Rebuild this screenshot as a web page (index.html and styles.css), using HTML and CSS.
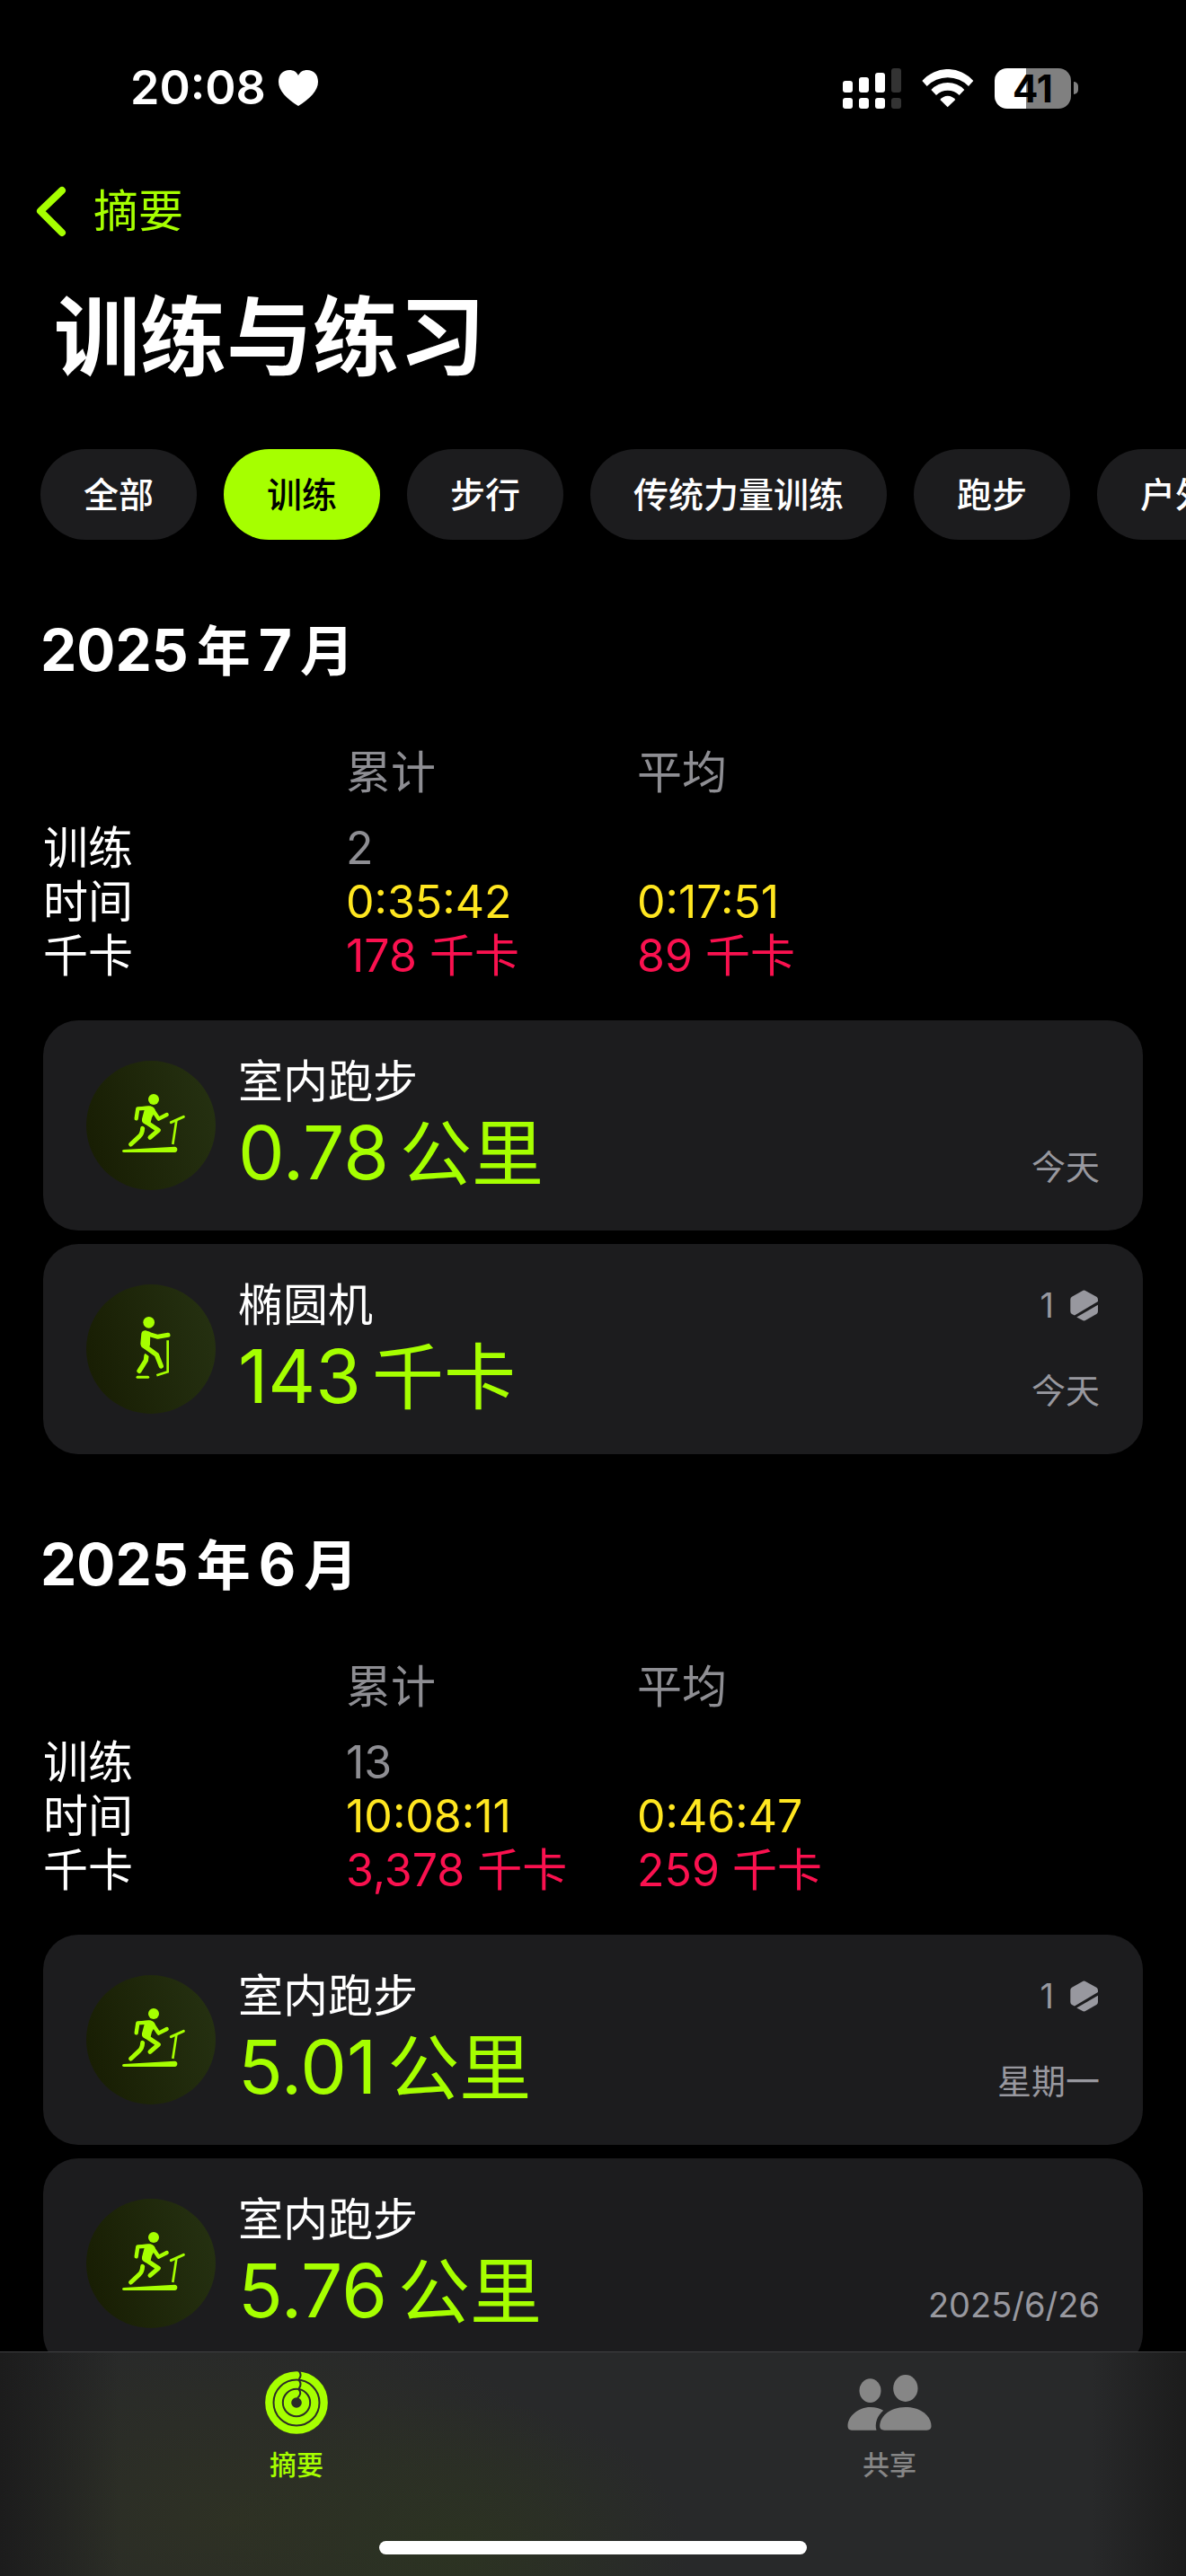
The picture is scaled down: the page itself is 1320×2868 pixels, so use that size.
FILE: index.html
```html
<!DOCTYPE html>
<html lang="zh-CN">
<head>
<meta charset="UTF-8">
<meta name="viewport" content="width=device-width, initial-scale=1">
<title>训练与练习</title>
<link rel="stylesheet" href="styles.css">
</head>
<body>
    <!-- shared icons -->
    <svg class="defs" aria-hidden="true">
        <symbol id="treadmill" viewBox="48 36 432 432">
            <g fill="none" stroke="currentColor" stroke-linecap="round" stroke-linejoin="round">
                <path stroke-width="13" d="M215 229 L220 196 L256 194"/>
                <path stroke-width="13" d="M264 196 C274 202 280 218 290 230 L317 216"/>
                <path stroke-width="15" d="M244 238 L289 268 L261 292"/>
                <path stroke-width="15" d="M236 262 Q235 280 224 290 L197 315"/>
                <path stroke-width="9" d="M331 242 L373 223"/>
                <path stroke-width="8" stroke-linecap="butt" d="M349 236 L337 315"/>
            </g>
            <g fill="currentColor">
                <circle cx="273" cy="165" r="18"/>
                <path d="M236 189 L262 187 Q278 192 279 205 L267 226 L262 246 L246 248 Q232 243 234 230 L242 200Z"/>
                <path d="M173 333 L343 323 Q352 324 352 332 Q352 341 343 342 L173 342 Q168 341 168 338 Q168 333 173 333Z"/>
            </g>
            <path d="M225 247 Q234 246 246 257" fill="none" stroke="#1e260c" stroke-width="5"/>
        </symbol>
        <symbol id="elliptical" viewBox="48 48 432 432">
            <g fill="none" stroke="currentColor" stroke-linecap="round" stroke-linejoin="round">
                <path stroke-width="15" d="M246 211 L287 223 L321 217"/>
                <path stroke-width="16" d="M240 252 L283 283 L298 321"/>
                <path stroke-width="16" d="M249 286 L247 302 L225 337"/>
                <path stroke-width="9" d="M219 358 L254 358"/>
                <path stroke-width="8" stroke-linecap="butt" stroke-linejoin="miter" d="M320 235 L320 340 L283 352"/>
            </g>
            <g fill="currentColor">
                <circle cx="257" cy="175" r="19"/>
                <path d="M232 212 Q235 202 246 202 L262 207 L261 246 Q262 258 248 264 Q229 259 229 246Z"/>
            </g>
            <path d="M232 268 Q246 276 262 288" fill="none" stroke="#1e260c" stroke-width="5"/>
        </symbol>
        <symbol id="award" viewBox="566 949 94 105">
            <path fill="currentColor" d="M607 952 Q613 948 619 952 L655 972 Q660 975 660 981 L660 988 L581 1035 L572 1030 Q567 1027 567 1021 L567 981 Q567 975 572 972Z"/>
            <path fill="currentColor" d="M660 999 L660 1021 Q660 1027 655 1030 L619 1051 Q613 1055 607 1051 L588 1041Z"/>
        </symbol>
    </svg>

    <header class="status-bar">
        <div class="status-time">
            <span>20:08</span>
            <svg width="44" height="40" viewBox="0 0 44 40"><path fill="#fff" d="M22 40 C9 32 0 23 0 13 C0 5 5 0 12 0 C17 0 20 2 22 6 C24 2 27 0 32 0 C39 0 44 5 44 13 C44 23 35 32 22 40Z"/></svg>
        </div>
        <div class="status-icons">
            <svg width="65" height="45" viewBox="0 0 65 45" fill="#fff">
                <rect x="0" y="14" width="11" height="13" rx="3"/>
                <rect x="18" y="10" width="11" height="17" rx="3"/>
                <rect x="36" y="5" width="11" height="22" rx="3"/>
                <rect x="54" y="0" width="11" height="27" rx="3" fill="#333"/>
                <rect x="0" y="33" width="11" height="12" rx="3"/>
                <rect x="18" y="33" width="11" height="12" rx="3"/>
                <rect x="36" y="33" width="11" height="12" rx="3"/>
                <rect x="54" y="33" width="11" height="12" rx="3" fill="#333"/>
            </svg>
            <svg width="58" height="43" viewBox="494 104 174 129" fill="#fff">
                <path d="M495 143 A113 113 0 0 1 666 143 L650 161 A98 98 0 0 0 511 161Z"/>
                <path d="M525 173 A76 76 0 0 1 636 173 L619 191 A55 55 0 0 0 542 191Z"/>
                <path d="M555 206 A32 32 0 0 1 606 206 L580 231Z"/>
            </svg>
            <div class="battery"><span class="battery-level">41</span></div>
        </div>
    </header>

    <main class="page">
        <a class="back" href="#">
            <svg width="34" height="57" viewBox="0 0 34 57"><path d="M29 5 L5 28 L29 52" fill="none" stroke="currentColor" stroke-width="8" stroke-linecap="round" stroke-linejoin="round"/></svg>
            摘要
        </a>
        <h1>训练与练习</h1>

        <nav class="filters">
            <button type="button">全部</button>
            <button type="button" class="active">训练</button>
            <button type="button">步行</button>
            <button type="button">传统力量训练</button>
            <button type="button">跑步</button>
            <button type="button">户外步行</button>
        </nav>

        <section class="month">
            <h2>2025<span>年</span>7<span>月</span></h2>
            <table>
                <thead>
                    <tr><td></td><th scope="col">累计</th><th scope="col">平均</th></tr>
                </thead>
                <tbody>
                    <tr class="count"><th scope="row">训练</th><td>2</td><td></td></tr>
                    <tr class="time"><th scope="row">时间</th><td>0:35:42</td><td>0:17:51</td></tr>
                    <tr class="energy"><th scope="row">千卡</th><td>178 千卡</td><td>89 千卡</td></tr>
                </tbody>
            </table>
            <a class="card" href="#">
                <svg class="card-icon"><use href="#treadmill"/></svg>
                <div class="card-main">
                    <div class="card-name">室内跑步</div>
                    <div class="card-value">0.78<span>公里</span></div>
                </div>
                <div class="card-side">
                    <div class="card-date">今天</div>
                </div>
            </a>
            <a class="card" href="#">
                <svg class="card-icon"><use href="#elliptical"/></svg>
                <div class="card-main">
                    <div class="card-name">椭圆机</div>
                    <div class="card-value">143<span>千卡</span></div>
                </div>
                <div class="card-side">
                    <div class="card-award">1 <svg width="31" height="35"><use href="#award"/></svg></div>
                    <div class="card-date">今天</div>
                </div>
            </a>
        </section>

        <section class="month">
            <h2>2025<span>年</span>6<span>月</span></h2>
            <table>
                <thead>
                    <tr><td></td><th scope="col">累计</th><th scope="col">平均</th></tr>
                </thead>
                <tbody>
                    <tr class="count"><th scope="row">训练</th><td>13</td><td></td></tr>
                    <tr class="time"><th scope="row">时间</th><td>10:08:11</td><td>0:46:47</td></tr>
                    <tr class="energy"><th scope="row">千卡</th><td>3,378 千卡</td><td>259 千卡</td></tr>
                </tbody>
            </table>
            <a class="card" href="#">
                <svg class="card-icon"><use href="#treadmill"/></svg>
                <div class="card-main">
                    <div class="card-name">室内跑步</div>
                    <div class="card-value">5.01<span>公里</span></div>
                </div>
                <div class="card-side">
                    <div class="card-award">1 <svg width="31" height="35"><use href="#award"/></svg></div>
                    <div class="card-date">星期一</div>
                </div>
            </a>
            <a class="card" href="#">
                <svg class="card-icon"><use href="#treadmill"/></svg>
                <div class="card-main">
                    <div class="card-name">室内跑步</div>
                    <div class="card-value">5.76<span>公里</span></div>
                </div>
                <div class="card-side">
                    <div class="card-date">2025/6/26</div>
                </div>
            </a>
        </section>
    </main>

    <footer class="tab-bar">
        <nav class="tabs">
            <a class="active" href="#">
                <svg width="70" height="70" viewBox="105 60 210 210" fill="none">
                    <g stroke="currentColor">
                        <circle cx="210" cy="165" r="92" stroke-width="25"/>
                        <circle cx="210" cy="165" r="61" stroke-width="25"/>
                        <circle cx="210" cy="165" r="30" stroke-width="25"/>
                    </g>
                    <g stroke="#2a2c2a" stroke-width="6">
                        <path d="M217 58 Q230 72 218 87"/>
                        <path d="M217 89 Q230 103 218 118"/>
                        <path d="M217 120 Q230 134 213 150"/>
                    </g>
                </svg>
                <span>摘要</span>
            </a>
            <a href="#">
                <svg width="94" height="70" viewBox="68 60 281 210" fill="currentColor">
                    <ellipse cx="144" cy="125" rx="36" ry="40"/>
                    <ellipse cx="262" cy="117" rx="41" ry="45"/>
                    <path d="M82 257 Q69 257 69 243 C69 210 105 180 144 180 C162 180 178 185 188 191 C168 207 158 235 165 257Z"/>
                    <path d="M191 257 Q176 257 176 243 C176 215 205 180 262 180 C320 180 348 215 348 243 Q348 257 333 257Z"/>
                </svg>
                <span>共享</span>
            </a>
        </nav>
        <div class="home-indicator"></div>
    </footer>
</body>
</html>
```

FILE: styles.css
```css
* {
    box-sizing: border-box;
}
body {
    margin: 0;
    height: 100vh;
    display: flex;
    flex-direction: column;
    overflow: hidden;
    background-color: #000;
    color: #fff;
    font-family: Inter, "Noto Sans CJK SC", sans-serif;
    font-size: 50px;
    line-height: 60px;
}
a {
    color: inherit;
    text-decoration: none;
}
svg {
    display: block;
    flex: none;
}
.defs {
    position: absolute;
    width: 0;
    height: 0;
}

/* status bar */
.status-bar {
    flex: none;
    display: flex;
    justify-content: space-between;
    align-items: center;
    height: 196px;
    padding: 0 120px 0 145px;
}
.status-time {
    display: flex;
    align-items: center;
    gap: 14px;
    font-size: 52px;
    font-weight: 600;
}
.status-icons {
    display: flex;
    align-items: center;
    gap: 23px;
}
.battery {
    display: flex;
    align-items: center;
    gap: 3px;
}
.battery::after {
    content: "";
    width: 5px;
    height: 14px;
    border-radius: 0 7px 7px 0;
    background: #808080;
}
.battery-level {
    width: 85px;
    height: 45px;
    border-radius: 14px;
    background: linear-gradient(to right, #fff 41%, #808080 41%);
    color: #000;
    font-size: 42px;
    font-weight: 700;
    line-height: 45px;
    text-align: center;
}

/* content */
.page {
    flex: 1;
    min-height: 0;
    overflow: hidden;
}
.back {
    display: flex;
    align-items: center;
    gap: 30px;
    height: 78px;
    padding-left: 40px;
    color: #a6ff00;
}
h1 {
    margin: 41px 60px 65px;
    font-size: 96px;
    font-weight: 700;
    line-height: 120px;
}
.filters {
    display: flex;
    gap: 30px;
    padding-left: 45px;
    overflow: hidden;
}
.filters button {
    flex: none;
    height: 101px;
    padding: 0 48px;
    border: none;
    border-radius: 51px;
    background: #1c1c1e;
    color: #fff;
    font: inherit;
    font-size: 39px;
    font-weight: 500;
}
.filters .active {
    background: #a6ff00;
    color: #000;
}

.month {
    padding: 83px 48px 0;
}
h2 {
    margin: 0 0 65px -3px;
    font-size: 64px;
    font-weight: 700;
    line-height: 80px;
}
h2 span {
    margin: 0 9px;
    font-size: 60px;
}
table {
    width: 100%;
    margin-bottom: 42px;
    table-layout: fixed;
    border-collapse: collapse;
}
th,
td {
    height: 60px;
    padding: 0;
    font-weight: 400;
    text-align: left;
}
thead td,
thead th {
    height: 84px;
    padding-bottom: 24px;
    color: #8e8e93;
}
thead td {
    width: 337px;
}
thead th:nth-child(2) {
    width: 324px;
}
.count td {
    color: #8e8e93;
}
.time td {
    color: #ffe620;
}
.energy td {
    color: #fa114f;
}

.card {
    display: flex;
    align-items: center;
    height: 234px;
    margin-bottom: 15px;
    padding: 0 48px;
    border-radius: 39px;
    background: #1c1c1e;
}
.card:last-child {
    margin-bottom: 0;
}
.card-icon {
    width: 144px;
    height: 144px;
    margin-right: 25px;
    border-radius: 50%;
    background: linear-gradient(75deg, #171c02, #263212);
    color: #a6ff00;
}
.card-main {
    flex: 1;
    padding-top: 2px;
}
.card-value {
    color: #a6ff00;
    font-size: 82px;
    line-height: 100px;
}
.card-value span {
    margin-left: 12px;
    font-size: 80px;
}
.card-side {
    display: flex;
    flex-direction: column;
    justify-content: flex-end;
    align-items: flex-end;
    align-self: stretch;
    gap: 35px;
    padding-bottom: 41px;
    color: #98989f;
    font-size: 38px;
}
.card-award {
    display: flex;
    align-items: center;
    gap: 18px;
    padding-right: 2px;
}

/* tab bar */
.tab-bar {
    flex: none;
    display: flex;
    flex-direction: column;
    justify-content: space-between;
    height: 250px;
    padding: 21px 0 24px;
    border-top: 1px solid #404042;
    background:
        linear-gradient(to right, #1c1c1c, transparent 10%, transparent 92%, #1c1c1c),
        radial-gradient(ellipse 20% 70% at 38% 90%, #2c3322, transparent),
        radial-gradient(ellipse 30% 90% at 20% 75%, #2e3124, transparent),
        #28292a;
}
.tabs {
    display: grid;
    grid-template-columns: 1fr 1fr;
}
.tabs a {
    display: flex;
    flex-direction: column;
    align-items: center;
    gap: 14px;
    color: #868686;
    font-size: 30px;
    font-weight: 500;
    line-height: 40px;
}
.tabs .active {
    color: #a6ff00;
}
.home-indicator {
    width: 36%;
    height: 15px;
    margin: 0 auto;
    border-radius: 8px;
    background: #fff;
}
```
